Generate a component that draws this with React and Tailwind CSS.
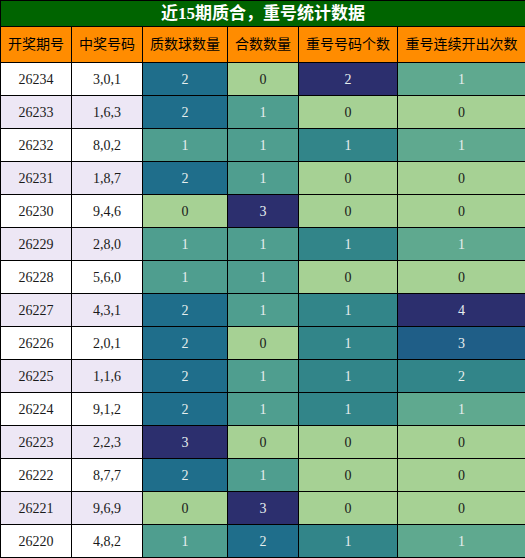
const rows = [
  ["26234", "3,0,1", 2, 0, 2, 1],
  ["26233", "1,6,3", 2, 1, 0, 0],
  ["26232", "8,0,2", 1, 1, 1, 1],
  ["26231", "1,8,7", 2, 1, 0, 0],
  ["26230", "9,4,6", 0, 3, 0, 0],
  ["26229", "2,8,0", 1, 1, 1, 1],
  ["26228", "5,6,0", 1, 1, 0, 0],
  ["26227", "4,3,1", 2, 1, 1, 4],
  ["26226", "2,0,1", 2, 0, 1, 3],
  ["26225", "1,1,6", 2, 1, 1, 2],
  ["26224", "9,1,2", 2, 1, 1, 1],
  ["26223", "2,2,3", 3, 0, 0, 0],
  ["26222", "8,7,7", 2, 1, 0, 0],
  ["26221", "9,6,9", 0, 3, 0, 0],
  ["26220", "4,8,2", 1, 2, 1, 1],
];

const headers = ["开奖期号", "中奖号码", "质数球数量", "合数数量", "重号号码个数", "重号连续开出次数"];

// colour scale per column (max 3 / max 2 / max 4)
const scale3 = [
  "bg-[#a6d194] text-[#1a1a1a]",
  "bg-[#4f9e8f] text-[#e6eeee]",
  "bg-[#1f6e8b] text-[#e6eeee]",
  "bg-[#2c2f6e] text-[#e6eeee]",
];
const scale2 = [
  "bg-[#a6d194] text-[#1a1a1a]",
  "bg-[#328589] text-[#e6eeee]",
  "bg-[#2c2f6e] text-[#e6eeee]",
];
const scale4 = [
  "bg-[#a6d194] text-[#1a1a1a]",
  "bg-[#5fa98f] text-[#e6eeee]",
  "bg-[#328589] text-[#e6eeee]",
  "bg-[#1f5e87] text-[#e6eeee]",
  "bg-[#2c2f6e] text-[#e6eeee]",
];

const font = { fontFamily: '"Liberation Serif", "Noto Sans CJK SC", serif' };

export default function App() {
  return (
    <div className="w-[525px] h-[558px] bg-black pl-px pt-px" style={font}>
      <div className="grid grid-cols-[70px_70px_84px_70px_98px_127px] grid-rows-[25px_35px_repeat(15,32px)] gap-px">
        {/* Title */}
        <div className="col-span-6 bg-[#006400] text-white font-bold text-[17px] flex items-center justify-center leading-none">
          近15期质合，重号统计数据
        </div>

        {/* Header */}
        {headers.map((h) => (
          <div key={h} className="bg-[#ff8c00] text-black text-[14px] flex items-center justify-center whitespace-nowrap">
            {h}
          </div>
        ))}

        {/* Rows */}
        {rows.map((r, i) => {
          const stripe = i % 2 === 0 ? "bg-white" : "bg-[#ede7f5]";
          return [
            <div key={r[0] + "a"} className={`${stripe} text-[#1a1a1a] text-[14px] flex items-center justify-center`}>
              {r[0]}
            </div>,
            <div key={r[0] + "b"} className={`${stripe} text-[#1a1a1a] text-[14px] flex items-center justify-center`}>
              {r[1]}
            </div>,
            <div key={r[0] + "c"} className={`${scale3[r[2]]} text-[14px] flex items-center justify-center`}>
              {r[2]}
            </div>,
            <div key={r[0] + "d"} className={`${scale3[r[3]]} text-[14px] flex items-center justify-center`}>
              {r[3]}
            </div>,
            <div key={r[0] + "e"} className={`${scale2[r[4]]} text-[14px] flex items-center justify-center`}>
              {r[4]}
            </div>,
            <div key={r[0] + "f"} className={`${scale4[r[5]]} text-[14px] flex items-center justify-center`}>
              {r[5]}
            </div>,
          ];
        })}
      </div>
    </div>
  );
}
